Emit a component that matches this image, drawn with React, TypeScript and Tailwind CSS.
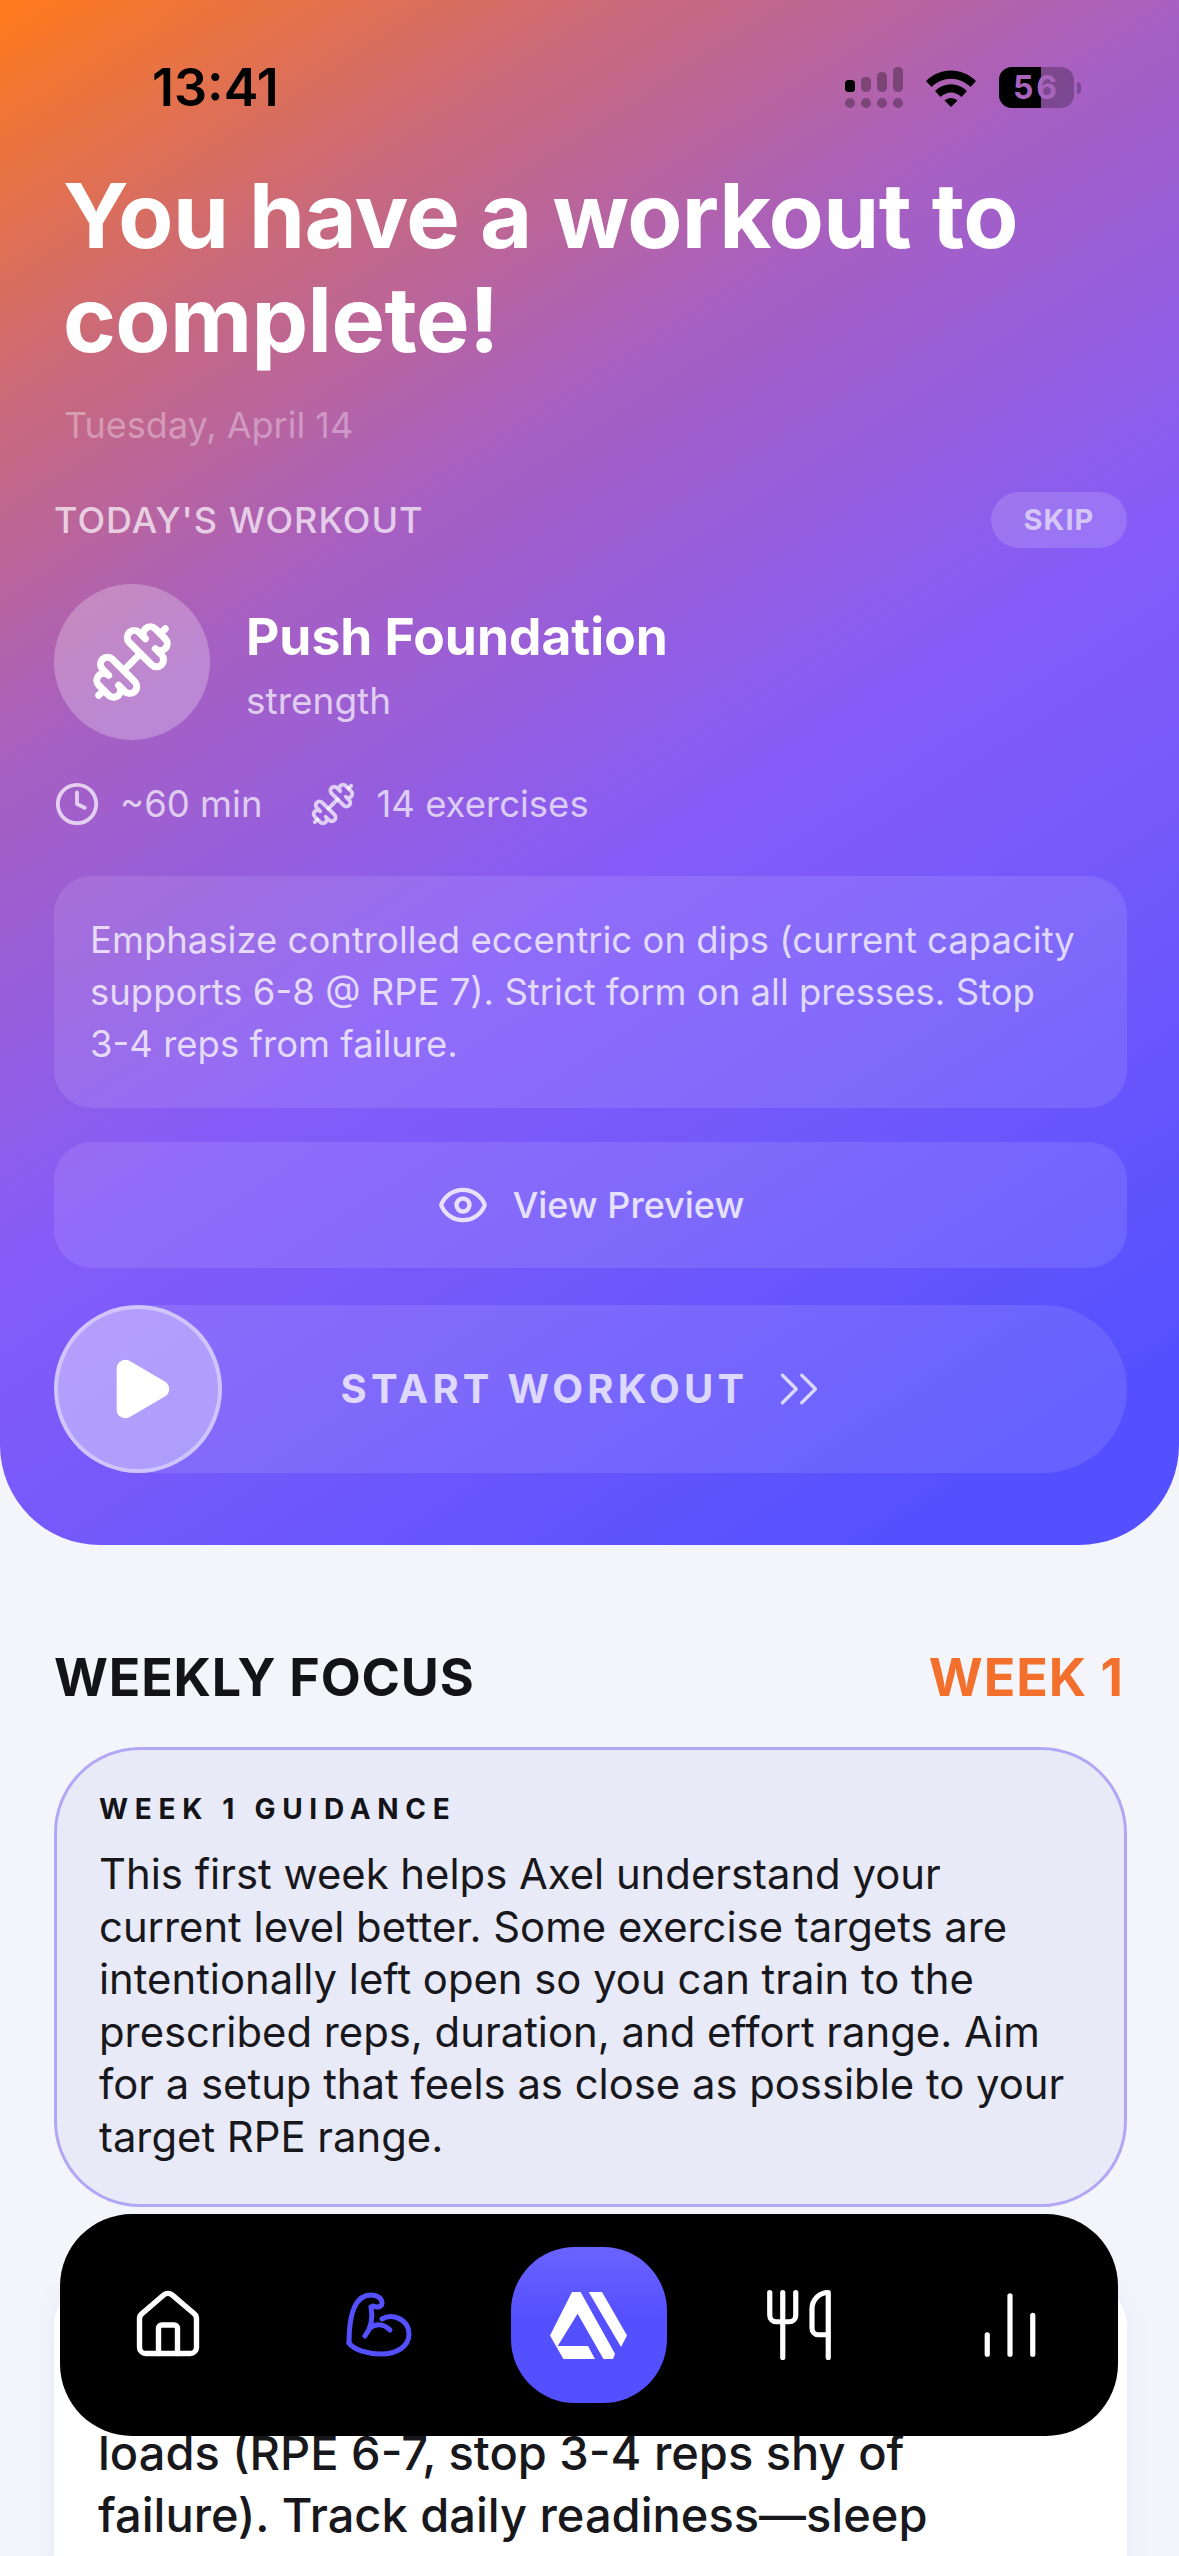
import { ChartNoAxesColumn, ChevronsRight, Clock, Dumbbell, Eye, House, Play, Utensils } from "lucide-react";

const font = "font-['Inter','Liberation_Sans',sans-serif]";

const SignalIcon = () => (
  <svg width="58" height="41" viewBox="0 0 58 41">
    <rect x="0" y="13" width="10" height="12" rx="3.5" fill="#000" />
    <rect x="16" y="10" width="10" height="15" rx="4.5" fill="#000" opacity="0.3" />
    <rect x="32" y="5" width="10" height="20" rx="4.5" fill="#000" opacity="0.3" />
    <rect x="48" y="0" width="10" height="25" rx="4.5" fill="#000" opacity="0.3" />
    <circle cx="5" cy="36" r="5" fill="#000" opacity="0.3" />
    <circle cx="21" cy="36" r="5" fill="#000" opacity="0.3" />
    <circle cx="37" cy="36" r="5" fill="#000" opacity="0.3" />
    <circle cx="53" cy="36" r="5" fill="#000" opacity="0.3" />
  </svg>
);

const WifiIcon = () => (
  <svg width="52" height="38" viewBox="0 0 52 38">
    <path d="M1 12 C15 -2 37 -2 51 12 L45.500 18 C34 7 18 7 6.500 18 Z" fill="#000" />
    <path d="M10 22 C19 13 33 13 42 22 L36.500 28 C30 22 22 22 15.500 28 Z" fill="#000" />
    <path d="M19.500 31.500 C23 28 29 28 32.500 31.500 L26 38 Z" fill="#000" />
  </svg>
);

const BatteryIcon = () => (
  <div className="flex items-center gap-[3px]">
    <div className="relative flex h-[41px] w-[75px] items-center justify-center overflow-hidden rounded-[13px] bg-black/25">
      <div className="absolute inset-y-0 left-0 w-[42px] bg-black" />
      <span className="relative text-[32px] leading-none font-bold tracking-[3px] text-[#a864bd]">56</span>
    </div>
    <div className="h-[12px] w-[4px] rounded-r-full bg-black/25" />
  </div>
);

const AppLogo = () => (
  <svg width="77" height="67" viewBox="0 0 77 67" fill="#fff">
    <path d="M22 0 H30.600 L65 61.700 L63 67 H53.500 L27.600 21.700 L7.700 54 H38 L45 67 H13.400 L0 43.500 Z" />
    <path d="M38.700 0 H52 L77 43.500 L71 55 Z" />
  </svg>
);

const FlexIcon = () => (
  <svg width="66" height="66" viewBox="0 0 66 66" fill="none" stroke="#5450ff" strokeWidth="5" strokeLinecap="round" strokeLinejoin="round">
    <path d="M3 51 C3 30 6 3 25 3 C32 3 36 7 36 11 C36 15 31 16 27 14" />
    <path d="M25 15 C27 25 25 36 19 44" />
    <path d="M24 36 C30 31 38 32 44 38" />
    <path d="M36 27 C46 21 63 27 63 42 C63 55 50 62 35 62 C22 62 8 58 3 51" />
  </svg>
);

const NavBar = () => (
  <nav className="absolute top-[2214px] left-[60px] grid h-[222px] w-[1058px] grid-cols-5 items-center justify-items-center rounded-[72px] bg-black px-[3px]">
    <House size={76} strokeWidth={1.7} color="#fff" />
    <FlexIcon />
    <div className="flex h-[156px] w-[156px] items-center justify-center rounded-[64px] bg-[linear-gradient(180deg,#6b63ff_0%,#5450ff_45%)]">
      <AppLogo />
    </div>
    <Utensils size={78} strokeWidth={1.6} color="#fff" />
    <ChartNoAxesColumn size={78} strokeWidth={1.6} color="#fff" />
  </nav>
);

const Hero = () => (
  <section className="flex h-[1545px] flex-col rounded-b-[100px] bg-[linear-gradient(147deg,#ff7a1a_0%,#c9697c_18%,#a860c0_33%,#855cf8_55%,#7058fb_72%,#5450ff_92%)] pr-[52px] pl-[54px]">
    <div className="flex h-[164px] items-start justify-between pt-[63px]">
      <span className="pl-[98px] text-[52px] leading-[50px] font-semibold text-black">13:41</span>
      <div className="mt-[4px] flex items-center gap-[22px] pr-[46px]">
        <SignalIcon />
        <WifiIcon />
        <BatteryIcon />
      </div>
    </div>
    <h1 className="pl-[9px] text-[90px] leading-[104px] font-bold tracking-[-0.6px] text-white">
      You have a workout to complete!
    </h1>
    <p className="mt-[31px] pl-[10px] text-[36px] leading-[44px] text-white/35">Tuesday, April 14</p>
    <div className="mt-[45px] flex items-center justify-between">
      <span className="text-[36px] leading-[44px] font-medium tracking-[1px] text-white/70">TODAY'S WORKOUT</span>
      <span className="flex h-[56px] w-[136px] items-center justify-center rounded-full bg-white/15 text-[29px] font-bold tracking-[1px] text-white/60">
        SKIP
      </span>
    </div>
    <div className="mt-[36px] flex items-center gap-[36px]">
      <div className="flex h-[156px] w-[156px] items-center justify-center rounded-full bg-white/25">
        <Dumbbell size={84} strokeWidth={2} color="#fff" />
      </div>
      <div className="flex flex-col pt-[4px]">
        <span className="text-[51.500px] leading-[62px] font-bold text-white">Push Foundation</span>
        <span className="mt-[12px] text-[37px] leading-[44px] text-white/70">strength</span>
      </div>
    </div>
    <div className="mt-[41px] flex items-center text-[36.500px] leading-[44px] text-white/70">
      <Clock size={46} strokeWidth={2} className="mr-[20px]" />
      <span>~60 min</span>
      <Dumbbell size={46} strokeWidth={2} className="mr-[20px] ml-[48px]" />
      <span>14 exercises</span>
    </div>
    <div className="mt-[49px] rounded-[38px] bg-white/10 px-[36px] pt-[38px] pb-[38px] text-[36.500px] leading-[52px] text-white/75">
      Emphasize controlled eccentric on dips (current capacity supports 6-8 @ RPE 7). Strict form on all presses. Stop{" "}
      <span className="whitespace-nowrap">3-4</span> reps from failure.
    </div>
    <div className="mt-[34px] flex h-[126px] items-center justify-center gap-[24px] rounded-[38px] bg-white/10 text-[36px] font-medium text-white/80">
      <Eye size={52} strokeWidth={2} />
      <span>View Preview</span>
    </div>
    <div className="relative mt-[37px] flex h-[168px] items-center justify-center rounded-full bg-white/10">
      <div className="absolute top-0 left-0 flex h-[168px] w-[168px] items-center justify-center rounded-full border-[4px] border-white/40 bg-white/35">
        <Play size={70} strokeWidth={2} fill="#fff" color="#fff" className="ml-[4px]" />
      </div>
      <div className="flex items-center gap-[18px] pr-[8px] text-[40px] font-bold tracking-[4.200px] text-white/75">
        <span>START WORKOUT</span>
        <ChevronsRight size={66} strokeWidth={1.2} />
      </div>
    </div>
  </section>
);

const WeeklyFocus = () => (
  <section className="pt-[102px] pr-[52px] pl-[54px]">
    <div className="flex items-center justify-between">
      <h2 className="text-[52px] leading-[62px] font-bold tracking-[0.800px] text-[#141418]">WEEKLY FOCUS</h2>
      <span className="pr-[3px] text-[52px] leading-[62px] font-bold tracking-[1px] text-[#f2702c]">WEEK 1</span>
    </div>
    <div className="mt-[38px] rounded-[86px] border-[3px] border-[#b0a8f4] bg-[#e9eaf8] pt-[43px] pr-[40px] pb-[41px] pl-[42px]">
      <p className="text-[28px] leading-[32px] font-bold tracking-[6.700px] text-[#141418]">WEEK 1 GUIDANCE</p>
      <p className="mt-[23px] text-[41.800px] leading-[52.500px] text-[#18181c]">
        This first week helps Axel understand your current level better. Some exercise targets are intentionally left
        open so you can train to the prescribed reps, duration, and effort range. Aim for a setup that feels as close
        as possible to your target RPE range.
      </p>
    </div>
    <div className="mt-[78px] rounded-[40px] bg-white px-[44px] pt-[75px] pb-[60px] text-[47px] leading-[62px] font-medium text-[#18181c] shadow-[0_0_24px_rgba(100,90,240,0.08)]">
      <p>Stay consistent with moderate</p>
      <p>loads (RPE 6-7, stop 3-4 reps shy of</p>
      <p>failure). Track daily readiness—sleep</p>
    </div>
  </section>
);

export default function App() {
  return (
    <div className={`relative h-[2556px] w-[1179px] overflow-hidden bg-[#f4f5fa] ${font}`}>
      <Hero />
      <WeeklyFocus />
      <NavBar />
    </div>
  );
}
